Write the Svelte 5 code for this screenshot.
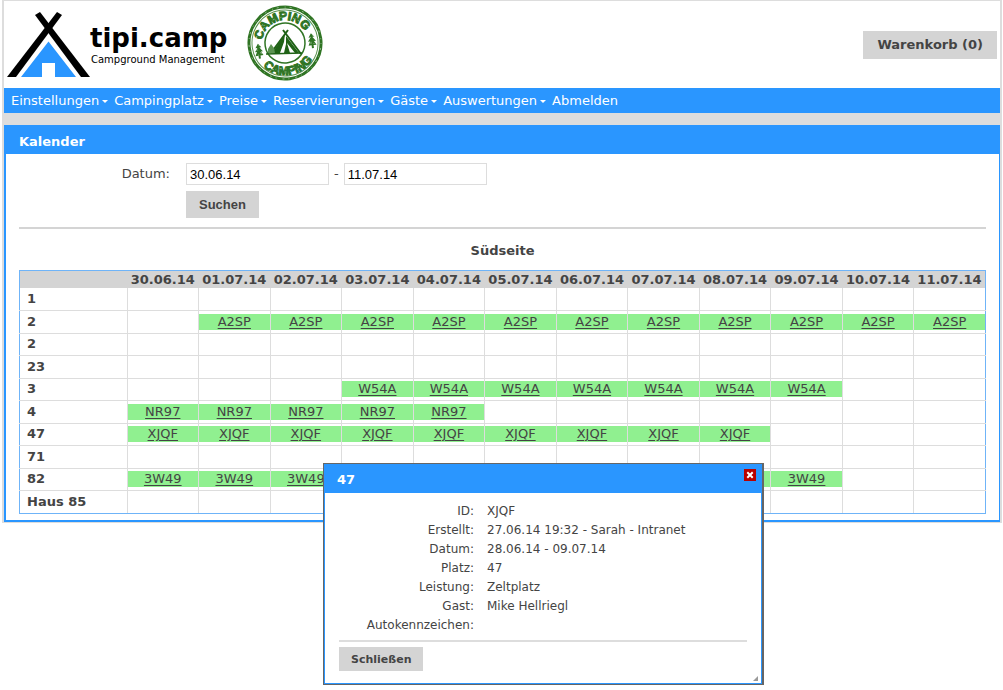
<script>
  const menu = [
    { label: 'Einstellungen', sub: true },
    { label: 'Campingplatz', sub: true },
    { label: 'Preise', sub: true },
    { label: 'Reservierungen', sub: true },
    { label: 'Gäste', sub: true },
    { label: 'Auswertungen', sub: true },
    { label: 'Abmelden', sub: false }
  ];

  const days = [
    '30.06.14', '01.07.14', '02.07.14', '03.07.14', '04.07.14', '05.07.14',
    '06.07.14', '07.07.14', '08.07.14', '09.07.14', '10.07.14', '11.07.14'
  ];

  // from / to are indexes into the list of days
  const places = [
    { name: '1' },
    { name: '2', code: 'A2SP', from: 1, to: 11 },
    { name: '2' },
    { name: '23' },
    { name: '3', code: 'W54A', from: 3, to: 9 },
    { name: '4', code: 'NR97', from: 0, to: 4 },
    { name: '47', code: 'XJQF', from: 0, to: 8 },
    { name: '71' },
    { name: '82', code: '3W49', from: 0, to: 9 },
    { name: 'Haus 85' }
  ];

  const details = [
    ['ID:', 'XJQF'],
    ['Erstellt:', '27.06.14 19:32 - Sarah - Intranet'],
    ['Datum:', '28.06.14 - 09.07.14'],
    ['Platz:', '47'],
    ['Leistung:', 'Zeltplatz'],
    ['Gast:', 'Mike Hellriegl'],
    ['Autokennzeichen:', '']
  ];

  let start = $state('30.06.14');
  let end = $state('11.07.14');
  let open = $state(true);
</script>

<div class="page">
  <header>
    <a class="brand" href="#start">
      <svg class="tent" viewBox="7 12 83 65" aria-hidden="true">
        <path d="M57 12l5 3L16 77H7z" fill="#000" />
        <path d="M40 12l-5 3 46 62h9z" fill="#000" />
        <path d="M48.5 41.5L76 77H55V63H42v14H21z" fill="#2a96ff" />
      </svg>
      <span class="words">
        <strong>tipi.camp</strong>
        <small>Campground Management</small>
      </span>
    </a>
    <svg class="stamp" viewBox="0 0 76 76" aria-hidden="true">
      <defs>
        <path id="arc-top" d="M15 38a23 23 0 0 1 46 0" />
        <path id="arc-bottom" d="M6 38a32 32 0 0 0 64 0" />
      </defs>
      <g transform="rotate(-8 38 38)" fill="none" stroke="#2f7423">
        <circle cx="38" cy="38" r="36" stroke-width="3" />
        <circle cx="38" cy="38" r="33" stroke-width="1" stroke="#5b9350" />
        <circle cx="38" cy="38" r="20" stroke-width="1.5" />
        <g class="ring" fill="#2f7423" stroke="#2f7423" stroke-width="1">
          <text text-anchor="middle"><textPath href="#arc-top" startOffset="48%">CAMPING</textPath></text>
          <text text-anchor="middle"><textPath href="#arc-bottom" startOffset="50%">CAMPING</textPath></text>
        </g>
        <g fill="#2f7423" stroke="none">
          <path d="M11 35l3 4h-2l3 4h-2l2 4h-3v3h-2v-3H7l2-4H7l3-4H8z" />
          <path d="M65 32l3 4h-2l3 4h-2l2 4h-3v3h-2v-3h-3l2-4h-2l3-4h-2z" />
        </g>
      </g>
      <g fill="none" stroke="#1f6216">
        <path d="M36 25l18 24M41 25L24 48" stroke-width="2" />
        <path d="M19 49l36-1" stroke-width="1.5" />
      </g>
      <path d="M38 29l-1 8-4 11h-8zM39 31l13 17h-4l-8-10 3 10h-6l2-9z" fill="#1f6216" />
      <path d="M21 44l3-5 3 4 1 5h-7z" fill="#5b9350" />
      <g stroke="#fff" stroke-width="0.7" stroke-dasharray="1 4 2 6" fill="none" opacity="0.7">
        <circle cx="38" cy="38" r="36" />
        <circle cx="38" cy="38" r="29" />
        <circle cx="38" cy="38" r="26" />
      </g>
    </svg>
    <button class="btn cart" type="button">Warenkorb (0)</button>
  </header>

  <nav>
    {#each menu as item}
      <a href="#{item.label}">{item.label}{#if item.sub}<i class="caret"></i>{/if}</a>
    {/each}
  </nav>

  <main>
    <h1>Kalender</h1>
    <div class="body">
      <form onsubmit={(e) => e.preventDefault()}>
        <label for="start">Datum:</label>
        <div class="range">
          <input id="start" type="text" bind:value={start} />
          <span>-</span>
          <input type="text" aria-label="Datum bis" bind:value={end} />
        </div>
        <button class="btn search" type="submit">Suchen</button>
      </form>

      <table>
        <caption>Südseite</caption>
        <thead>
          <tr>
            <td class="name"></td>
            {#each days as day}<th scope="col">{day}</th>{/each}
          </tr>
        </thead>
        <tbody>
          {#each places as place}
            <tr>
              <th scope="row">{place.name}</th>
              {#each days as day, i}
                <td>
                  {#if place.code && i >= place.from && i <= place.to}
                    <a href="#{place.code}" onclick={() => (open = true)}>{place.code}</a>
                  {/if}
                </td>
              {/each}
            </tr>
          {/each}
        </tbody>
      </table>
    </div>
  </main>
</div>

{#if open}
  <div class="dialog" role="dialog" aria-labelledby="dialog-title">
    <div class="bar">
      <h2 id="dialog-title">47</h2>
      <button class="close" type="button" aria-label="Schließen" onclick={() => (open = false)}>
        <svg viewBox="0 0 12 12"><path d="M4 4l4 4M8 4L4 8" stroke="#fff" stroke-width="2" stroke-linecap="square" /></svg>
      </button>
    </div>
    <div class="content">
      <dl>
        {#each details as [key, value]}
          <dt>{key}</dt>
          <dd>{value}</dd>
        {/each}
      </dl>
      <button class="btn" type="button" onclick={() => (open = false)}>Schließen</button>
    </div>
    <svg class="grip" viewBox="0 0 6 6" aria-hidden="true"><path d="M6 0v6H0z" fill="#999" /></svg>
  </div>
{/if}

<style>
  :global(body) {
    background: #fff;
    color: #444;
    font: 13px/16px Verdana, 'DejaVu Sans', sans-serif;
  }

  .page {
    margin: 0 1px 0 2px;
    border: solid #ddd;
    border-width: 1px 2px;
    background: #ddd;
  }

  header {
    display: flex;
    align-items: center;
    box-sizing: border-box;
    height: 87px;
    padding: 0 3px;
    background: #fff;
  }

  .brand {
    display: flex;
    align-items: center;
    color: #000;
    text-decoration: none;
  }

  .tent {
    width: 83px;
    height: 65px;
  }

  .words {
    display: flex;
    flex-direction: column;
    width: 157px;
  }

  .words strong {
    font-size: 26px;
    line-height: 30px;
  }

  .words small {
    padding-left: 1px;
    font-size: 10px;
    line-height: 14px;
  }

  .stamp {
    width: 76px;
    height: 76px;
    margin-bottom: 3px;
  }

  .ring {
    font: bold 12px 'Liberation Sans', Arial, sans-serif;
  }

  .btn {
    border: 0;
    padding: 0 12px;
    height: 24px;
    background: #d4d4d4;
    color: #444;
    font: bold 11px Verdana, 'DejaVu Sans', sans-serif;
  }

  .cart {
    margin-left: auto;
    height: 28px;
    padding: 0 14px;
    font-size: 13px;
  }

  nav {
    display: flex;
    flex-wrap: wrap;
    gap: 6px;
    padding: 5px 7px 4px;
    background: #2a96ff;
  }

  nav a {
    display: flex;
    align-items: center;
    gap: 3px;
    color: #fff;
    text-decoration: none;
  }

  .caret {
    border: solid transparent;
    border-width: 3px 3px 0;
    border-top-color: #fff;
  }

  main {
    margin-top: 12px;
    border: solid #2a96ff;
    border-width: 0 1px 2px 2px;
    background: #fff;
  }

  h1,
  h2 {
    margin: 0;
    color: #fff;
    font-size: 13px;
    line-height: 16px;
  }

  h1 {
    padding: 9px 13px 4px;
    background: #2a96ff;
  }

  .body {
    padding: 9px 13px 6px;
  }

  form {
    display: grid;
    grid-template-columns: 151px 1fr;
    gap: 6px 16px;
    align-items: center;
    padding-bottom: 9px;
    border-bottom: 2px solid #d4d4d4;
  }

  label {
    text-align: right;
  }

  .range {
    display: flex;
    align-items: center;
    gap: 5px;
  }

  input {
    box-sizing: border-box;
    width: 143px;
    height: 22px;
    padding: 0 3px;
    border: 1px solid #ddd;
    color: #000;
    font: 13px 'Liberation Sans', Arial, sans-serif;
  }

  .search {
    grid-column: 2;
    justify-self: start;
    height: 27px;
    padding: 0 13px;
    font: bold 13px 'Liberation Sans', Arial, sans-serif;
  }

  table {
    width: 100%;
    table-layout: fixed;
    border-collapse: collapse;
    border: 1px solid #6fb4f8;
  }

  caption {
    padding: 14px 0 11px;
    font-weight: bold;
  }

  .name {
    width: 105px;
  }

  thead {
    background: #d4d4d4;
  }

  thead th {
    padding: 1px 0 0;
    white-space: nowrap;
  }

  tbody tr {
    height: 22px;
  }

  tbody tr:nth-child(even) {
    height: 23px;
  }

  tbody th {
    padding: 0 0 0 7px;
    text-align: left;
    border-bottom: 1px solid #ddd;
  }

  tbody td {
    padding: 0;
    border: solid #ddd;
    border-width: 0 0 1px 1px;
    text-align: center;
  }

  tbody tr:last-child > * {
    border-bottom-color: #6fb4f8;
  }

  tbody td:last-child {
    border-right-color: #6fb4f8;
  }

  tbody a {
    display: block;
    background: #90f090;
    color: #444;
    text-underline-offset: 2px;
  }

  .dialog {
    position: absolute;
    top: 463px;
    left: 323px;
    box-sizing: border-box;
    width: 441px;
    border: solid #666;
    border-width: 1px 2px 1px 1px;
    background: #fff;
    box-shadow: inset 0 0 0 1px #2a96ff;
    font-size: 12px;
  }

  .bar {
    display: flex;
    justify-content: space-between;
    align-items: flex-start;
    padding: 5px 6px 5px 13px;
    background: #2a96ff;
  }

  h2 {
    padding-top: 3px;
  }

  .close {
    width: 12px;
    height: 12px;
    padding: 0;
    border: 0;
    background: #b80000;
  }

  .close svg {
    display: block;
  }

  .content {
    padding: 9px 15px 13px;
  }

  dl {
    display: grid;
    grid-template-columns: 135px 1fr;
    column-gap: 13px;
    margin: 0 0 5px;
    padding-bottom: 5px;
    border-bottom: 2px solid #ddd;
    line-height: 19px;
  }

  dt {
    text-align: right;
  }

  dd {
    margin: 0;
  }

  .grip {
    position: absolute;
    right: 4px;
    bottom: 3px;
    width: 5px;
    height: 5px;
  }
</style>
